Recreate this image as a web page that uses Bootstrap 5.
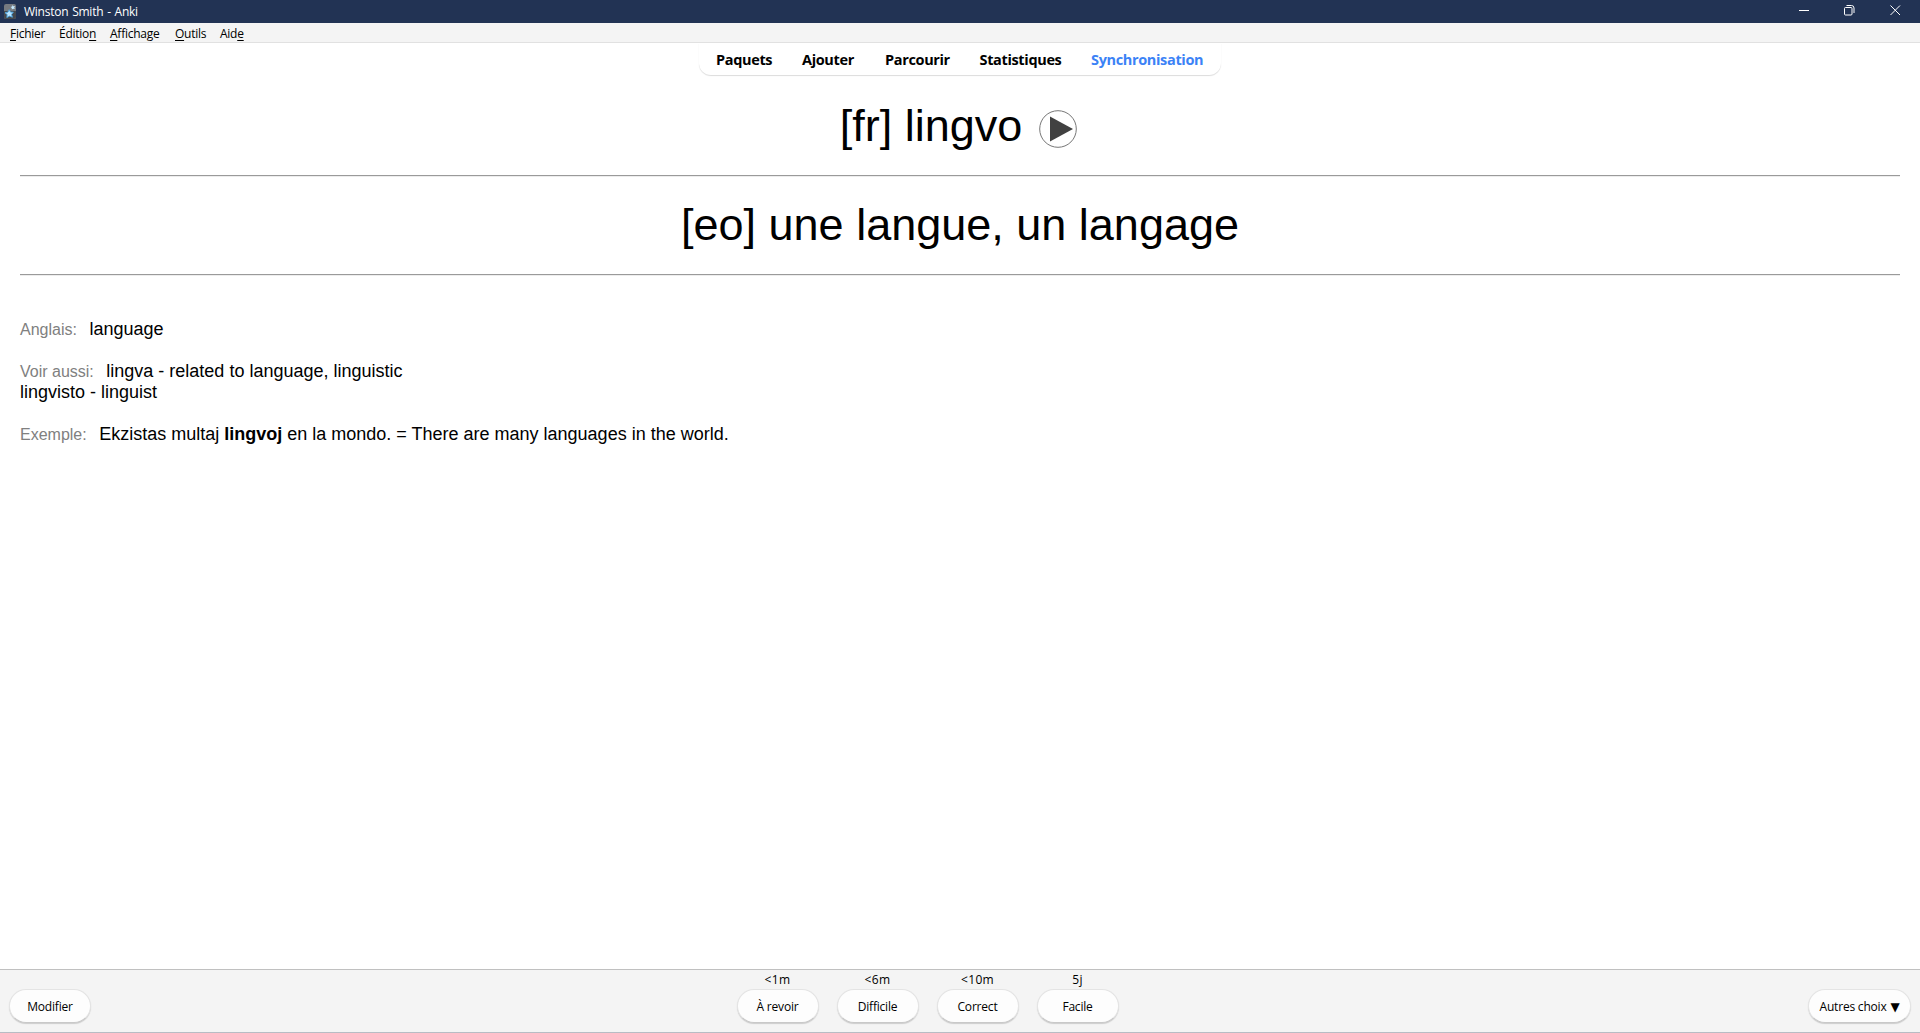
<!DOCTYPE html>
<html lang="fr">
<head>
<meta charset="utf-8">
<title>Winston Smith - Anki</title>
<link rel="stylesheet" href="https://cdn.jsdelivr.net/npm/bootstrap@5.3.0/dist/css/bootstrap.min.css">
<style>
body{font-family:"Open Sans","Noto Sans",sans-serif;font-size:12px;color:#000;background:#fff;line-height:16px}
.titlebar{height:23px;background:#223354;color:#fff;padding-left:4px}
.titlebar .caption{margin-left:8px;letter-spacing:-.25px;word-spacing:1px;padding-top:1px}
.titlebar .winbtns{margin-right:19px;gap:35px;padding-bottom:2px}
.menubar{height:20px;background:#f4f4f4;border-bottom:1px solid #e1e1e1;padding-left:10px}
.menubar a{color:#000;text-decoration:none;letter-spacing:-.25px;white-space:nowrap;line-height:21px}
.menubar a:nth-child(1){width:49px}
.menubar a:nth-child(2){width:51px}
.menubar a:nth-child(3){width:65px}
.menubar a:nth-child(4){width:45px}
.menubar u{text-underline-offset:2px}
.toolbar{width:522px;height:32px;border-radius:0 0 12px 12px;box-shadow:0 1px 1px rgba(0,0,0,.14);padding-left:17px}
.toolbar a{color:#000;text-decoration:none;font-size:14.5px;font-weight:700;letter-spacing:-.35px;line-height:33px;white-space:nowrap}
.toolbar a:nth-child(1){width:86px}
.toolbar a:nth-child(2){width:83px}
.toolbar a:nth-child(3){width:94.5px}
.toolbar a:nth-child(4){width:111.5px}
.toolbar a.sync{color:#3b82f6}
.studycard{font-family:"Liberation Sans",Arial,sans-serif;font-size:18px;line-height:21px;padding:25px 20px 0}
.headword{font-size:45px;line-height:52px;height:52px}
.prompt-row{padding-right:2px}
.studycard hr{margin:23px 0 22px;border:0;opacity:1;height:2px;background:linear-gradient(#9a9a9a 50%,#ededed 50%)}
.details{padding-top:21px}
.fieldname{font-size:16px;color:#808080;margin-right:12.5px}
.bottombar{height:64px;background:#f4f4f4;border-top:1px solid #c0c0c0;border-bottom:1px solid #b8bcc4;padding:0 10px 9px}
.pill{--bs-btn-font-size:12px;--bs-btn-line-height:16px;--bs-btn-bg:#fdfdfd;--bs-btn-color:#000;--bs-btn-border-color:#e4e4e4;--bs-btn-border-radius:17px;--bs-btn-padding-x:0;--bs-btn-padding-y:0;width:82px;height:34px;padding-top:2px;letter-spacing:-.2px;border-bottom-color:#c9c9c9;box-shadow:0 1px 1px rgba(0,0,0,.16);margin:0 -1px;white-space:nowrap}
.pill.more{width:103px}
.caret-glyph{font-family:"DejaVu Sans",sans-serif;font-size:12px;line-height:12px;margin-left:1px}
.answers{gap:20px;margin-right:44px}
.answer{width:80px}
.delay{height:19px;line-height:20px;letter-spacing:.35px}
</style>
<script src="https://cdn.jsdelivr.net/npm/bootstrap@5.3.0/dist/js/bootstrap.bundle.min.js"></script>
</head>
<body class="d-flex flex-column vh-100 overflow-hidden">
<header class="titlebar d-flex align-items-center flex-shrink-0">
  <svg width="12" height="15" viewBox="0 0 12 15"><rect width="12" height="15" rx="2" fill="#777b80"/><path d="M0 7h12v6a2 2 0 0 1-2 2H2a2 2 0 0 1-2-2z" fill="#45494e"/><path d="M5.2 5.7l1.3 2.4 2.8.1-1.7 2.2.8 2.8-2.900-1.100-2.700 1.400.4-2.900L1 8.700l2.900-.5z" fill="#b9e4ff" stroke="#4da5e0" stroke-width=".9"/><path d="M8.500 1l.8 1.200 1.700-.1-.8 1.500.6 1.500-1.600-.4-1.400.9V3.900L6.600 3l1.500-.5z" fill="#c5e9ff"/></svg>
  <span class="caption flex-grow-1">Winston Smith - Anki</span>
  <div class="winbtns d-flex align-items-center">
    <svg width="11" height="11" viewBox="0 0 11 11"><path d="M1 5.500h10" stroke="#fff"/></svg>
    <svg width="11" height="11" viewBox="0 0 11 11" fill="none" stroke="#fff"><rect x=".5" y="2.500" width="7.500" height="7.500" rx="1"/><path d="M2.500.5H7.500Q10 .5 10 3v5"/></svg>
    <svg width="11" height="11" viewBox="0 0 11 11"><path d="M.5.5l9.500 9.500M10 .5L.5 10" stroke="#fff"/></svg>
  </div>
</header>
<nav class="menubar d-flex flex-shrink-0">
  <a href="#"><u>F</u>ichier</a><a href="#">Éditio<u>n</u></a><a href="#"><u>A</u>ffichage</a><a href="#"><u>O</u>utils</a><a href="#">Aid<u>e</u></a>
</nav>
<nav class="toolbar d-flex mx-auto flex-shrink-0">
  <a href="#">Paquets</a><a href="#">Ajouter</a><a href="#">Parcourir</a><a href="#">Statistiques</a><a href="#" class="sync">Synchronisation</a>
</nav>
<main class="studycard flex-grow-1">
  <div class="headword prompt-row d-flex justify-content-center align-items-center">
    <span>[fr] lingvo</span>
    <svg class="ms-3 mt-2" width="40" height="40" viewBox="0 0 40 40"><circle cx="20" cy="19" r="18.300" fill="#fff" stroke="#777"/><path d="M12 6.500v25L35 19z" fill="#414141"/></svg>
  </div>
  <hr>
  <div class="headword text-center">[eo] une langue, un langage</div>
  <hr>
  <div class="details">
    <p class="mb-0"><span class="fieldname">Anglais:</span>language</p><br>
    <p class="mb-0"><span class="fieldname">Voir aussi:</span>lingva - related to language, linguistic<br>lingvisto - linguist</p><br>
    <p class="mb-0"><span class="fieldname">Exemple:</span>Ekzistas multaj <b>lingvoj</b> en la mondo. = There are many languages in the world.</p>
  </div>
</main>
<footer class="bottombar d-flex justify-content-between align-items-end flex-shrink-0">
  <button class="btn pill">Modifier</button>
  <div class="answers d-flex text-center">
    <div class="answer"><div class="delay">&lt;1m</div><button class="btn pill">À revoir</button></div>
    <div class="answer"><div class="delay">&lt;6m</div><button class="btn pill">Difficile</button></div>
    <div class="answer"><div class="delay">&lt;10m</div><button class="btn pill">Correct</button></div>
    <div class="answer"><div class="delay">5j</div><button class="btn pill">Facile</button></div>
  </div>
  <button class="btn pill more">Autres choix <span class="caret-glyph">▼</span></button>
</footer>
</body>
</html>
